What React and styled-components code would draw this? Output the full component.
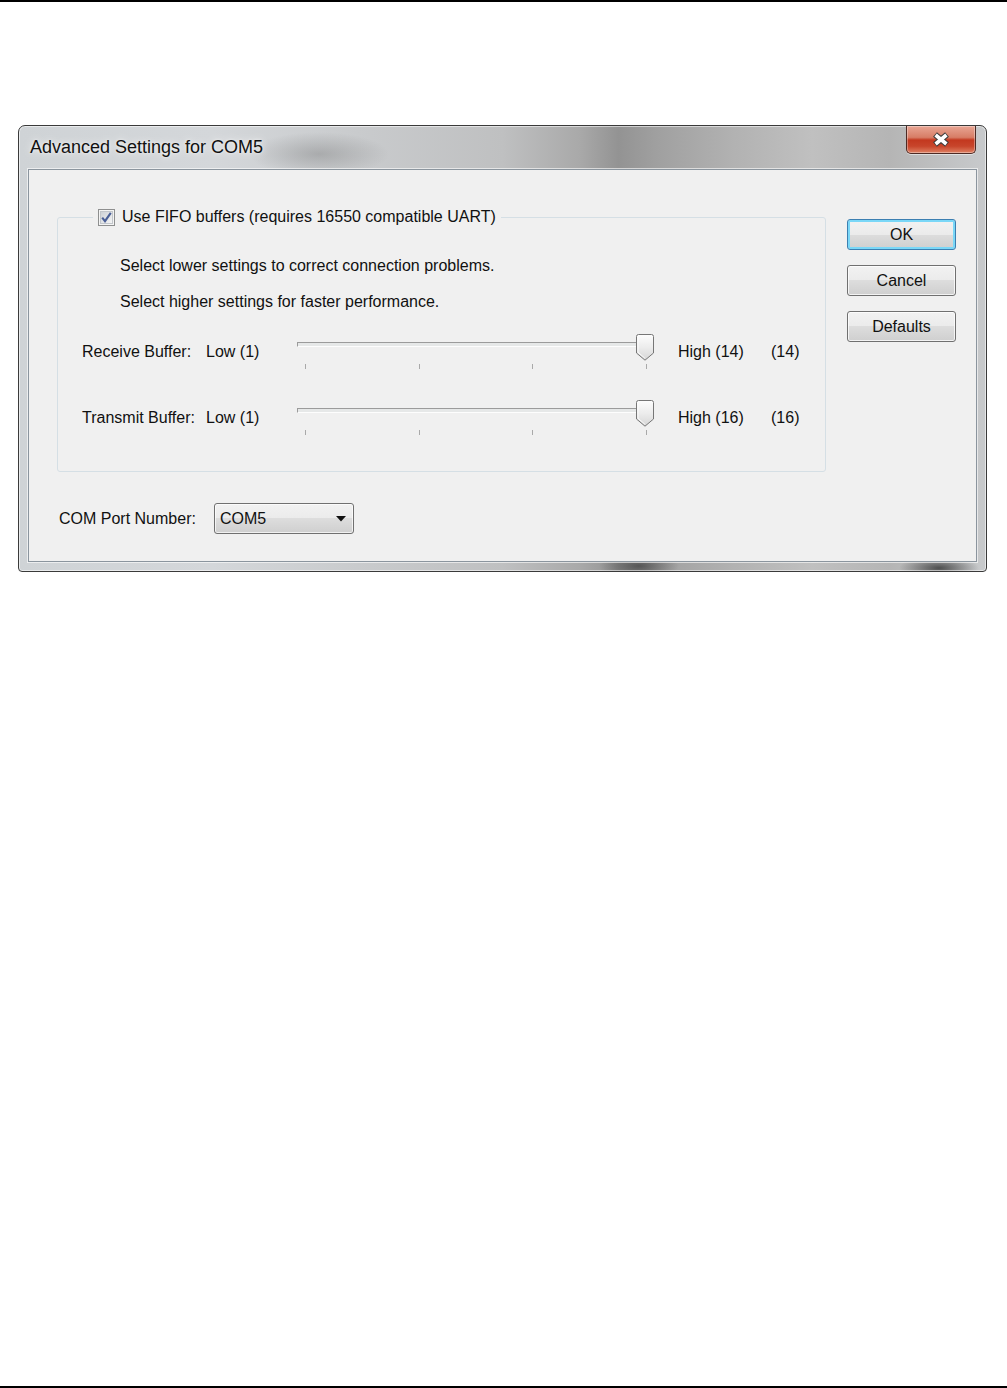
import React from "react";
import styled, { createGlobalStyle } from "styled-components";

const GlobalStyle = createGlobalStyle`
  html, body {
    margin: 0;
    padding: 0;
    background: #fff;
  }
  body {
    font-family: "Liberation Sans", Arial, sans-serif;
  }
  * {
    box-sizing: border-box;
  }
`;

const CloseIcon = () => (
  <svg width="20" height="15" viewBox="0 0 20 15">
    <g strokeLinecap="butt">
      <line x1="4" y1="2.5" x2="16" y2="12.5" stroke="#3b3b3b" strokeWidth="6" />
      <line x1="16" y1="2.5" x2="4" y2="12.5" stroke="#3b3b3b" strokeWidth="6" />
      <line x1="4.6" y1="3" x2="15.4" y2="12" stroke="#fff" strokeWidth="3.6" />
      <line x1="15.4" y1="3" x2="4.6" y2="12" stroke="#fff" strokeWidth="3.6" />
    </g>
  </svg>
);

const CheckIcon = () => (
  <svg width="17" height="17" viewBox="0 0 17 17">
    <defs>
      <linearGradient id="cbfill" x1="0" y1="0" x2="1" y2="1">
        <stop offset="0" stopColor="#cbcfd5" />
        <stop offset="1" stopColor="#f6f6f6" />
      </linearGradient>
    </defs>
    <rect x="0.5" y="0.5" width="16" height="16" fill="#f4f4f4" stroke="#8e8f8f" />
    <rect x="2.5" y="2.5" width="12" height="12" fill="url(#cbfill)" stroke="#c2c6cb" />
    <path d="M4.2 8.6 L7 12.2 L12.8 3.8" fill="none" stroke="#4a5f97" strokeWidth="2.1" />
  </svg>
);

const ThumbIcon = () => (
  <svg width="18" height="27" viewBox="0 0 18 27">
    <defs>
      <linearGradient id="thumbfill" x1="0" y1="0" x2="0" y2="1">
        <stop offset="0" stopColor="#fdfdfd" />
        <stop offset="0.5" stopColor="#ececec" />
        <stop offset="1" stopColor="#d6d6d6" />
      </linearGradient>
    </defs>
    <path
      d="M2.5 0.5 H15.5 Q17.5 0.5 17.5 2.5 V19 L9 26.2 L0.5 19 V2.5 Q0.5 0.5 2.5 0.5 Z"
      fill="url(#thumbfill)"
      stroke="#767676"
    />
    <path d="M2 2.5 V18.3 L9 24.3" fill="none" stroke="#fff" strokeOpacity="0.8" />
  </svg>
);

const ArrowIcon = () => (
  <svg width="10" height="6" viewBox="0 0 10 6">
    <path d="M0 0 H10 L5 5.5 Z" fill="#111" />
  </svg>
);

const Slider = ({ ticks }) => (
  <SliderBox>
    <Track />
    <Ticks>
      {Array.from({ length: ticks }).map((_, i) => (
        <Tick key={i} />
      ))}
    </Ticks>
    <Thumb>
      <ThumbIcon />
    </Thumb>
  </SliderBox>
);

const buffers = [
  { name: "Receive Buffer:", high: 14 },
  { name: "Transmit Buffer:", high: 16 },
];

const App = () => {
  return (
    <Page>
      <GlobalStyle />
      <Window>
        <TitleBar>
          <Title>Advanced Settings for COM5</Title>
          <CloseButton>
            <CloseIcon />
          </CloseButton>
        </TitleBar>
        <Client>
          <LeftColumn>
            <Group>
              <Legend>
                <CheckIcon />
                <span>Use FIFO buffers (requires 16550 compatible UART)</span>
              </Legend>
              <Hint>Select lower settings to correct connection problems.</Hint>
              <Hint $gap={16}>Select higher settings for faster performance.</Hint>
              <Rows>
                {buffers.map((b) => (
                  <BufferRow key={b.name}>
                    <Label>{b.name}</Label>
                    <Label>Low (1)</Label>
                    <Slider ticks={4} />
                    <Label>High ({b.high})</Label>
                    <Label>({b.high})</Label>
                  </BufferRow>
                ))}
              </Rows>
            </Group>
            <PortRow>
              <PortLabel>COM Port Number:</PortLabel>
              <Select>
                <span>COM5</span>
                <ArrowIcon />
              </Select>
            </PortRow>
          </LeftColumn>
          <Buttons>
            <Button $default>OK</Button>
            <Button>Cancel</Button>
            <Button>Defaults</Button>
          </Buttons>
        </Client>
      </Window>
    </Page>
  );
};

export default App;

const Page = styled.div`
  height: 1388px;
  border-top: 2px solid #000;
  border-bottom: 2px solid #000;
  padding: 123px 0 0 18px;
`;

const Window = styled.div`
  width: 969px;
  height: 447px;
  display: flex;
  flex-direction: column;
  padding: 0 9px 9px 9px;
  border: 1px solid #3a3a3a;
  border-radius: 7px 7px 4px 4px;
  box-shadow: inset 0 0 0 1px rgba(255, 255, 255, 0.55);
  background:
    radial-gradient(ellipse 70px 22px at 300px 28px, rgba(80, 80, 80, 0.28), transparent),
    radial-gradient(ellipse 40px 14px at 620px 440px, rgba(40, 40, 40, 0.6), transparent),
    radial-gradient(ellipse 40px 12px at 920px 442px, rgba(30, 30, 30, 0.7), transparent),
    linear-gradient(
      90deg,
      #cfd3d6 0%,
      #d4d7da 20%,
      #c9cbcd 35%,
      #bfc0c1 50%,
      #a9a9a9 58%,
      #939393 62%,
      #a0a0a0 66%,
      #b2b2b2 74%,
      #c0c0c0 82%,
      #b5b5b5 90%,
      #c8cacc 100%
    );
`;

const TitleBar = styled.div`
  height: 43px;
  display: flex;
  justify-content: space-between;
  align-items: center;
  padding-left: 2px;
`;

const Title = styled.div`
  font-size: 18px;
  color: #111;
  text-shadow: 0 0 8px rgba(255, 255, 255, 0.9), 0 0 3px rgba(255, 255, 255, 0.7);
`;

const CloseButton = styled.div`
  align-self: flex-start;
  width: 70px;
  height: 28px;
  margin-right: 1px;
  display: flex;
  align-items: center;
  justify-content: center;
  border: 1px solid #4d2a24;
  border-top: none;
  border-radius: 0 0 5px 5px;
  background: linear-gradient(
    #e9a694 0%,
    #d77d66 42%,
    #c3381f 52%,
    #c8452b 75%,
    #df8163 100%
  );
  box-shadow: inset 0 0 0 1px rgba(255, 255, 255, 0.35), 0 1px 0 rgba(255, 255, 255, 0.5);
`;

const Client = styled.div`
  flex: 1;
  display: grid;
  grid-template-columns: 769px 109px;
  column-gap: 21px;
  align-items: start;
  padding: 37px 0 0 28px;
  border: 1px solid #8b959e;
  background: #f0f0f0;
  box-shadow: 0 0 0 1px rgba(255, 255, 255, 0.6);
`;

const LeftColumn = styled.div`
  display: flex;
  flex-direction: column;
`;

const Group = styled.fieldset`
  margin: 0;
  padding: 0 0 35px 0;
  border: 1px solid #d5dfe5;
  border-radius: 3px;
  min-width: 0;
`;

const Legend = styled.legend`
  margin-left: 35px;
  padding: 0 5px;
  height: 20px;
  display: flex;
  align-items: center;
  gap: 7px;
  font-size: 16px;
  color: #111;
`;

const Hint = styled.div`
  margin: ${(p) => p.$gap ?? 29}px 0 0 62px;
  font-size: 16px;
  line-height: 20px;
  color: #111;
`;

const Rows = styled.div`
  margin: 22px 0 0 24px;
  display: flex;
  flex-direction: column;
  gap: 30px;
`;

const BufferRow = styled.div`
  height: 36px;
  display: grid;
  grid-template-columns: 124px 91px 381px 93px auto;
  align-items: center;
`;

const Label = styled.span`
  font-size: 16px;
  color: #111;
  white-space: nowrap;
`;

const SliderBox = styled.div`
  position: relative;
  height: 36px;
  width: 358px;
`;

const Track = styled.div`
  margin-top: 8px;
  width: 355px;
  height: 5px;
  background: #e6e8e8;
  border-top: 1px solid #9b9b9b;
  border-left: 1px solid #9b9b9b;
  border-bottom: 1px solid #fdfdfd;
  border-right: 1px solid #d0d0d0;
`;

const Ticks = styled.div`
  margin: 17px 0 0 8px;
  width: 342px;
  display: flex;
  justify-content: space-between;
`;

const Tick = styled.div`
  width: 1px;
  height: 5px;
  background: #a9a9a9;
`;

const Thumb = styled.div`
  position: absolute;
  top: 0;
  left: 339px;
  line-height: 0;
`;

const PortRow = styled.div`
  margin-top: 31px;
  height: 31px;
  display: flex;
  align-items: center;
  padding-left: 2px;
`;

const PortLabel = styled.span`
  width: 155px;
  font-size: 16px;
  color: #111;
`;

const Select = styled.div`
  width: 140px;
  height: 31px;
  display: flex;
  align-items: center;
  justify-content: space-between;
  padding: 0 7px 0 5px;
  font-size: 16px;
  color: #111;
  border: 1px solid #707070;
  border-radius: 3px;
  background: linear-gradient(#f2f2f2 0%, #ebebeb 50%, #dddddd 50%, #cfcfcf 100%);
  box-shadow: inset 0 0 0 1px rgba(255, 255, 255, 0.7);
`;

const Buttons = styled.div`
  margin-top: 12px;
  display: flex;
  flex-direction: column;
  gap: 15px;
`;

const Button = styled.button`
  width: 109px;
  height: 31px;
  padding: 0;
  font-family: "Liberation Sans", Arial, sans-serif;
  font-size: 16px;
  color: #111;
  border: 1px solid ${(p) => (p.$default ? "#3c7fb1" : "#707070")};
  border-radius: 3px;
  background: linear-gradient(#f2f2f2 0%, #ebebeb 50%, #dddddd 50%, #cfcfcf 100%);
  box-shadow: inset 0 0 0 ${(p) => (p.$default ? "2px #7ad7f7" : "1px rgba(255, 255, 255, 0.75)")};
`;
